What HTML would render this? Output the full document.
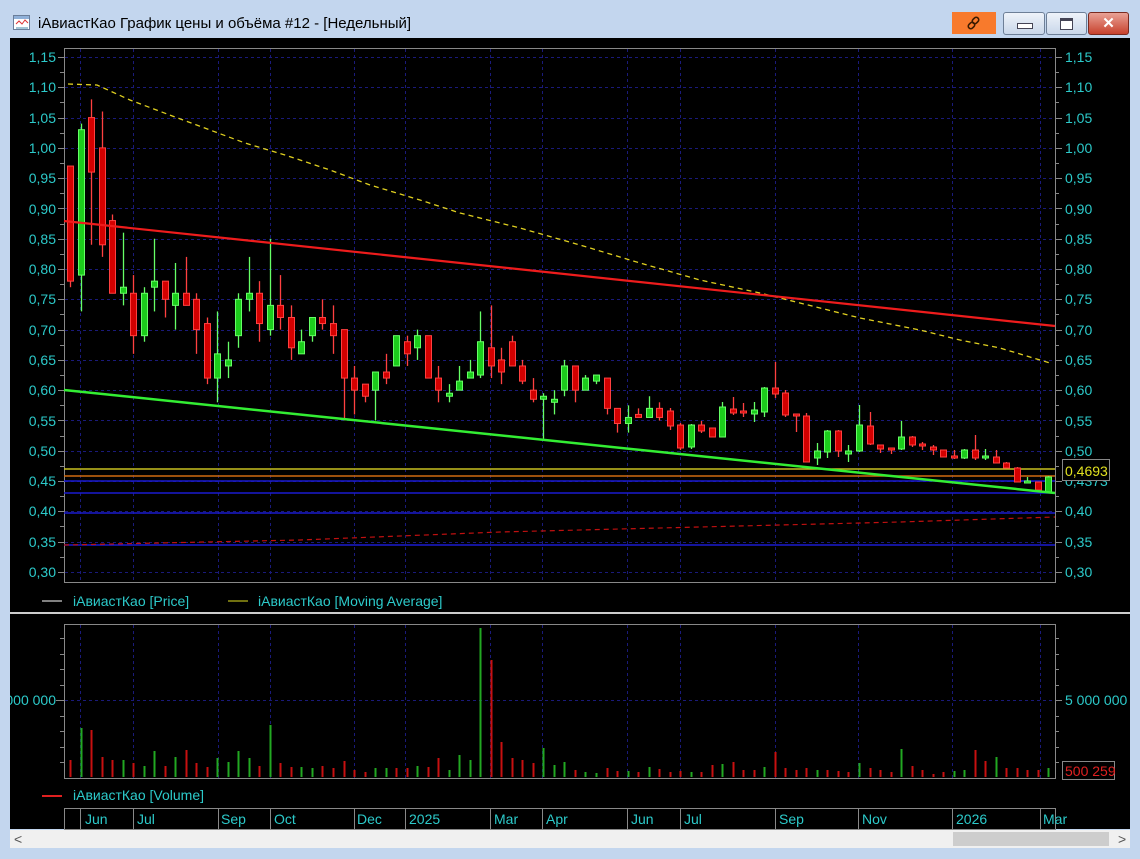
<!DOCTYPE html>
<html><head><meta charset="utf-8"><style>
*{margin:0;padding:0}
body{width:1140px;height:859px;overflow:hidden;background:#c3d6ee;font-family:"Liberation Sans",sans-serif;position:relative}
.t{position:absolute;font-size:15px;color:#000;left:38px;top:15px}
.btn{position:absolute;top:12px;height:21px;border:1px solid #6d7f97;border-radius:3px;background:linear-gradient(#eef3fa,#c9d7ea)}
#main{position:absolute;left:10px;top:38px;width:1120px;height:791px;background:#000}
svg text{font-family:"Liberation Sans",sans-serif;font-size:14px;fill:#2ccaca}
</style></head><body>
<svg style="position:absolute;left:13px;top:15px" width="18" height="16"><rect x="0.5" y="0.5" width="16" height="14" fill="#fff" stroke="#6a7e9a"/><rect x="1" y="1" width="15" height="3" fill="#8fb0d8"/><polyline points="3,9 6,6 9,9 12,5 15,8" fill="none" stroke="#d33"/><line x1="3" y1="13" x2="15" y2="13" stroke="#48a"/></svg>
<div class="t">iАвиастКао График цены и объёма #12 - [Недельный]</div>
<div style="position:absolute;left:952px;top:12px;width:44px;height:22px;background:#f87a2c"></div>
<svg style="position:absolute;left:966px;top:15px" width="16" height="16"><g fill="none" stroke="#3a1a00" stroke-width="1.6"><rect x="7" y="2" width="5" height="7" rx="2.5" transform="rotate(45 9.5 5.5)"/><rect x="3" y="7" width="5" height="7" rx="2.5" transform="rotate(45 5.5 10.5)"/></g></svg>
<div class="btn" style="left:1003px;width:40px"><div style="position:absolute;left:13px;top:10px;width:14px;height:4px;background:#fff;border:1px solid #445"></div></div>
<div class="btn" style="left:1046px;width:39px"><div style="position:absolute;left:13px;top:5px;width:11px;height:8px;background:#fff;border:1px solid #445;border-top-width:3px"></div></div>
<div class="btn" style="left:1088px;width:39px;background:linear-gradient(#e9a296,#c8422e);border-color:#7a2a20"><div style="position:absolute;left:0;width:39px;top:1px;text-align:center;color:#fff;font-weight:bold;font-size:15px">✕</div></div>
<div id="main"></div>
<svg id="s" style="position:absolute;left:0;top:0" width="1140" height="859">
<defs><clipPath id="cl"><rect x="10" y="38" width="1120" height="791"/></clipPath></defs>
<g id="grid" stroke="#1a1a7a" stroke-dasharray="3,3" stroke-width="1"></g>
<rect x="64.5" y="48.5" width="991" height="534" fill="none" stroke="#888"/>
<rect x="64.5" y="624.5" width="991" height="154" fill="none" stroke="#888"/>
<line x1="10" y1="613" x2="1130" y2="613" stroke="#ccc" stroke-width="2"/>
<g id="ticks" stroke="#888"></g>
<g>
<text x="56" y="62" text-anchor="end">1,15</text><text x="56" y="92" text-anchor="end">1,10</text><text x="56" y="123" text-anchor="end">1,05</text><text x="56" y="153" text-anchor="end">1,00</text><text x="56" y="183" text-anchor="end">0,95</text><text x="56" y="214" text-anchor="end">0,90</text><text x="56" y="244" text-anchor="end">0,85</text><text x="56" y="274" text-anchor="end">0,80</text><text x="56" y="304" text-anchor="end">0,75</text><text x="56" y="335" text-anchor="end">0,70</text><text x="56" y="365" text-anchor="end">0,65</text><text x="56" y="395" text-anchor="end">0,60</text><text x="56" y="426" text-anchor="end">0,55</text><text x="56" y="456" text-anchor="end">0,50</text><text x="56" y="486" text-anchor="end">0,45</text><text x="56" y="516" text-anchor="end">0,40</text><text x="56" y="547" text-anchor="end">0,35</text><text x="56" y="577" text-anchor="end">0,30</text>
<text x="1065" y="62">1,15</text><text x="1065" y="92">1,10</text><text x="1065" y="123">1,05</text><text x="1065" y="153">1,00</text><text x="1065" y="183">0,95</text><text x="1065" y="214">0,90</text><text x="1065" y="244">0,85</text><text x="1065" y="274">0,80</text><text x="1065" y="304">0,75</text><text x="1065" y="335">0,70</text><text x="1065" y="365">0,65</text><text x="1065" y="395">0,60</text><text x="1065" y="426">0,55</text><text x="1065" y="456">0,50</text><text x="1065" y="486">0,4373</text><text x="1065" y="516">0,40</text><text x="1065" y="547">0,35</text><text x="1065" y="577">0,30</text>
</g>
<line x1="64" y1="469" x2="1055" y2="469" stroke="#c8c020" stroke-width="1.5"/>
<line x1="64" y1="476" x2="1055" y2="476" stroke="#d06a10" stroke-width="1.5"/>
<line x1="64" y1="481" x2="1055" y2="481" stroke="#1a1ad0" stroke-width="1.5"/>
<line x1="64" y1="493" x2="1055" y2="493" stroke="#1a1ad0" stroke-width="1.5"/>
<line x1="64" y1="513" x2="1055" y2="513" stroke="#1a1ad0" stroke-width="1.5"/>
<line x1="64" y1="545" x2="1055" y2="545" stroke="#1a1ad0" stroke-width="1.5"/>
<polyline points="64,545 300,540 500,532 700,527 900,522 1055,517" fill="none" stroke="#c01010" stroke-dasharray="5,4" stroke-width="1.2"/>
<polyline points="68,84 97,85 130,100 175,117 210,130 245,143 285,155 330,170 370,185 420,200 460,213 520,228 580,245 640,263 700,280 760,293 820,308 860,318 920,330 960,340 1000,348 1050,363" fill="none" stroke="#e0d020" stroke-dasharray="5,4" stroke-width="1.3"/>
<g id="c"></g>
<line x1="64" y1="221" x2="1055" y2="326" stroke="#ee1c1c" stroke-width="2.2"/>
<line x1="64" y1="390" x2="1055" y2="493" stroke="#33ee33" stroke-width="2.5"/>
<rect x="1062.5" y="459.5" width="47" height="21" fill="#000" stroke="#888"/>
<text x="1065" y="476" style="fill:#e0e020">0,4693</text>
<line x1="42" y1="601" x2="62" y2="601" stroke="#fff"/><text x="73" y="606">iАвиастКао [Price]</text>
<line x1="228" y1="601" x2="248" y2="601" stroke="#e0e020"/><text x="258" y="606">iАвиастКао [Moving Average]</text>
<g id="v"></g>
<g clip-path="url(#cl)"><text x="56" y="705" text-anchor="end">5 000 000</text></g>
<text x="1065" y="705">5 000 000</text>
<rect x="1062.5" y="761.5" width="52" height="18" fill="#000" stroke="#888"/>
<text x="1065" y="776" style="fill:#e02020">500 259</text>
<line x1="42" y1="796" x2="62" y2="796" stroke="#e02020" stroke-width="2"/><text x="73" y="800">iАвиастКао [Volume]</text>
<rect x="64.5" y="808.5" width="991" height="21" fill="none" stroke="#888"/>
<g id="dsep" stroke="#888"></g>
<g>
<text x="85" y="824">Jun</text><text x="137" y="824">Jul</text><text x="221" y="824">Sep</text><text x="274" y="824">Oct</text><text x="357" y="824">Dec</text><text x="409" y="824">2025</text><text x="494" y="824">Mar</text><text x="546" y="824">Apr</text><text x="631" y="824">Jun</text><text x="684" y="824">Jul</text><text x="779" y="824">Sep</text><text x="862" y="824">Nov</text><text x="956" y="824">2026</text><text x="1043" y="824">Mar</text>
</g>
<rect x="10" y="830" width="1120" height="18" fill="#f0f0f0"/>
<rect x="953" y="832" width="156" height="14" fill="#cdcdcd"/>
<text x="14" y="844" style="fill:#555;font-size:14px">&lt;</text>
<text x="1118" y="844" style="fill:#555;font-size:14px">&gt;</text>
</svg>
<script>
var NS="http://www.w3.org/2000/svg";
function el(p,t,a){var e=document.createElementNS(NS,t);for(var k in a)e.setAttribute(k,a[k]);document.getElementById(p).appendChild(e);return e}
function Y(p){return 57+(1.15-p)*605.8}
for(var p=1.15;p>0.29;p-=0.05){var y=Math.round(Y(p))+.5;el("grid","line",{x1:65,y1:y,x2:1055,y2:y});el("ticks","line",{x1:58,y1:y,x2:64,y2:y});el("ticks","line",{x1:1055,y1:y,x2:1062,y2:y});var y2=Math.round(Y(p-0.025))+.5;if(p>0.31){el("ticks","line",{x1:60,y1:y2,x2:64,y2:y2});el("ticks","line",{x1:1055,y1:y2,x2:1059,y2:y2});}}
var vx=[80,133,218,270,354,405,490,542,627,680,775,858,952,1040];
vx.forEach(function(x){el("grid","line",{x1:x+.5,y1:49,x2:x+.5,y2:582});el("grid","line",{x1:x+.5,y1:625,x2:x+.5,y2:778});el("dsep","line",{x1:x+.5,y1:809,x2:x+.5,y2:829})});
el("grid","line",{x1:65,y1:700.5,x2:1055,y2:700.5});
[638,654,669,685,700,716,731,747,762].forEach(function(y){el("ticks","line",{x1:y==700?56:60,y1:y+.5,x2:64,y2:y+.5});el("ticks","line",{x1:1055,y1:y+.5,x2:y==700?1062:1059,y2:y+.5})});
var A=[[.97,.78,.97,.77],[.79,1.03,1.04,.73],[1.05,.96,1.08,.84],[1.00,.84,1.06,.82],[.88,.76,.89,.76],[.76,.77,.86,.74],[.76,.69,.79,.66],[.69,.76,.77,.68],[.77,.78,.85,.73],[.78,.75,.78,.72],[.74,.76,.81,.70],[.76,.74,.82,.74],[.75,.70,.76,.66],[.71,.62,.72,.61],[.62,.66,.73,.58],[.64,.65,.68,.62],[.69,.75,.76,.67],[.75,.76,.82,.73],[.76,.71,.78,.68],[.70,.74,.85,.69],[.74,.72,.79,.70],[.72,.67,.74,.65],[.66,.68,.70,.66],[.69,.72,.72,.68],[.72,.71,.75,.70],[.71,.69,.74,.66],[.70,.62,.70,.55],[.62,.60,.64,.56],[.61,.59,.61,.58],[.60,.63,.63,.55],[.63,.62,.66,.61],[.64,.69,.69,.64],[.68,.66,.69,.64],[.67,.69,.70,.65],[.69,.62,.69,.62],[.62,.60,.64,.58],[.59,.595,.61,.58],[.60,.615,.64,.60],[.62,.63,.65,.62],[.625,.68,.73,.62],[.67,.64,.74,.62],[.65,.63,.67,.61],[.68,.64,.69,.64],[.64,.615,.65,.61],[.60,.585,.62,.58],[.585,.59,.595,.52],[.58,.585,.60,.56],[.60,.64,.65,.59],[.64,.60,.64,.58],[.60,.62,.625,.60],[.615,.625,.625,.61],[.62,.57,.62,.56],[.57,.545,.57,.53],[.545,.555,.575,.53],[.56,.555,.57,.555],[.555,.57,.59,.555],[.57,.555,.58,.55]];
var B=[["r",411,426,408,430],["r",425,448,423,450],["g",425,447,424,449],["r",425,431,421,433],["r",428,437,428,437],["g",407,437,402,437],["r",409,413,397,415],["r",411,413,403,417],["g",410,414,402,422],["g",388,412,387,417],["r",388,394,362,398],["r",393,415,390,417],["r",414,416,414,432],["r",416,462,413,462],["g",451,458,443,465],["g",431,452,430,458],["r",431,451,430,457],["g",451,454,445,462],["g",425,451,405,452],["r",426,444,412,445],["r",445,449,445,453],["r",448,450,448,454],["g",437,449,421,450],["r",437,445,436,447],["r",444,446,442,450],["r",447,450,445,455],["r",450,457,450,457],["r",456,458,450,459],["g",450,458,449,459],["r",450,458,435,460],["g",456,458,449,460],["r",457,463,450,463],["r",463,468,462,468],["r",468,482,467,482],["g",481,483,477,483],["r",482,490,482,491],["g",477,492,476,493]];
function cd(x,t,top,bot,wt,wb){var col=t=="g"?"#1ccc1c":"#d40000",st=t=="g"?"#66ff66":"#ff4040";el("c","line",{x1:x,y1:wt,x2:x,y2:wb,stroke:st,"stroke-width":1.3});if(bot-top<2){top-=1;bot=top+2}el("c","rect",{x:x-3,y:top,width:6,height:bot-top,fill:col,stroke:st,"stroke-width":1})}
var i=0;
A.forEach(function(d){var x=Math.round(70+i*10.52)+.5;var g=d[1]>=d[0];cd(x,g?"g":"r",Y(Math.max(d[0],d[1])),Y(Math.min(d[0],d[1])),Y(d[2]),Y(d[3]));i++});
B.forEach(function(d){var x=Math.round(70+i*10.52)+.5;cd(x,d[0],d[1],d[2],d[3],d[4]);i++});
var V=[["r",760],["g",728],["r",730],["r",757],["r",760],["g",760],["r",763],["g",766],["g",751],["r",766],["g",757],["r",750],["r",763],["r",767],["g",758],["g",762],["g",751],["g",758],["r",766],["g",725],["r",763],["r",767],["g",767],["g",768],["r",766],["r",768],["r",761],["r",770],["r",772],["g",768],["g",768],["r",768],["r",768],["g",766],["r",767],["r",758],["g",770],["g",755],["g",760],["g",628],["r",660],["r",742],["r",758],["r",760],["r",763],["g",748],["g",765],["g",762],["r",770],["g",772],["g",773],["r",768],["r",771],["g",771],["r",772],["g",767],["r",769],["r",772],["r",771],["g",772],["r",772],["r",765],["g",764],["r",762],["r",770],["r",770],["g",767],["r",752],["r",768],["r",770],["r",768],["g",770],["r",770],["r",771],["r",772],["g",763],["r",768],["r",770],["r",772],["g",749],["r",766],["r",770],["r",774],["r",772],["g",771],["g",770],["r",750],["r",761],["g",757],["r",768],["r",768],["r",770],["r",770],["g",768]];
V.forEach(function(d,j){var x=Math.round(70+j*10.52)+.5;el("v","line",{x1:x,y1:d[1],x2:x,y2:777,stroke:d[0]=="g"?"#22a822":"#c81010","stroke-width":2})});
</script>
</body></html>
